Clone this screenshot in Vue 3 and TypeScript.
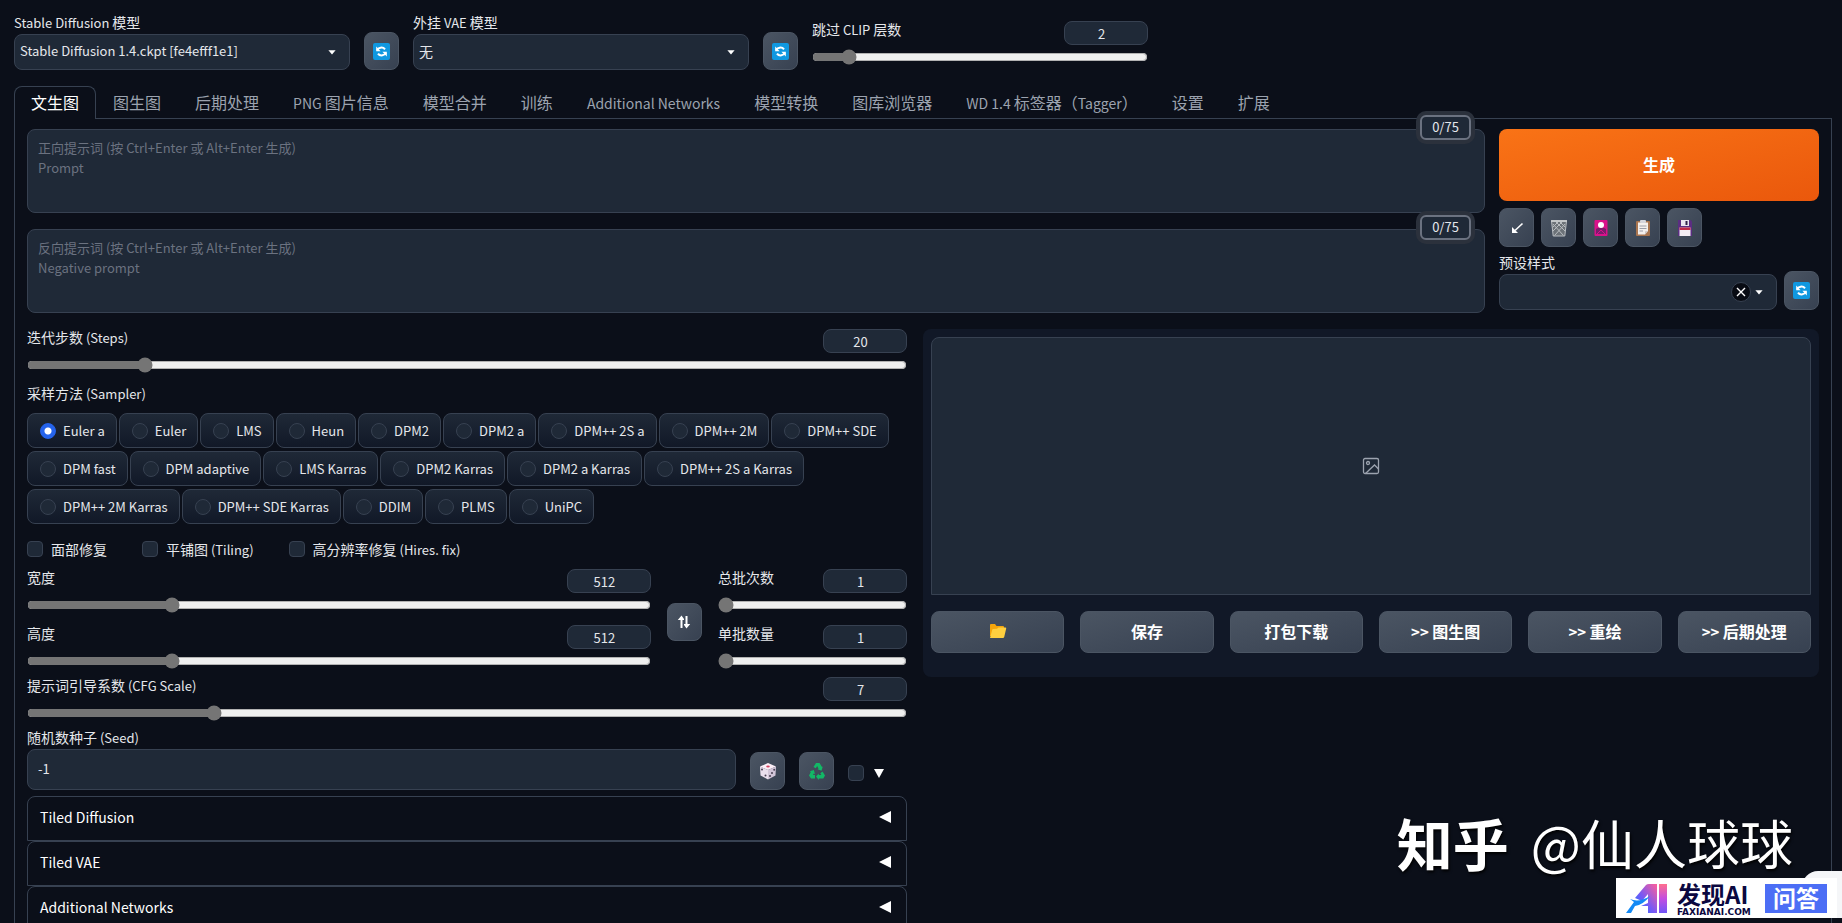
<script setup lang="ts">
import { ref, h, type FunctionalComponent } from 'vue'

interface Range {
  id: string
  label: string
  min: number
  max: number
  step: number
  value: number
}

/* Latin runs are set slightly smaller than the Chinese text around them. */
const Mixed: FunctionalComponent<{ text: string }> = (props) =>
  h(
    'span',
    props.text
      .split(/([\x20-\x7e]+)/)
      .filter((part) => part.length > 0)
      .map((part) => (/^[\x20-\x7e]+$/.test(part) ? h('span', { class: 'latin' }, part) : part)),
  )
Mixed.props = ['text']

const clip = ref<Range>({ id: 'clip', label: '跳过 CLIP 层数', min: 1, max: 12, step: 1, value: 2 })
const steps = ref<Range>({ id: 'steps', label: '迭代步数 (Steps)', min: 1, max: 150, step: 1, value: 20 })
const cfg = ref<Range>({ id: 'cfg', label: '提示词引导系数 (CFG Scale)', min: 1, max: 30, step: 1, value: 7 })
const sizes = ref<Range[]>([
  { id: 'width', label: '宽度', min: 64, max: 2048, step: 8, value: 512 },
  { id: 'height', label: '高度', min: 64, max: 2048, step: 8, value: 512 },
])
const batches = ref<Range[]>([
  { id: 'batch-count', label: '总批次数', min: 1, max: 100, step: 1, value: 1 },
  { id: 'batch-size', label: '单批数量', min: 1, max: 8, step: 1, value: 1 },
])

const tabs = [
  '文生图', '图生图', '后期处理', 'PNG 图片信息', '模型合并', '训练', 'Additional Networks',
  '模型转换', '图库浏览器', 'WD 1.4 标签器（Tagger）', '设置', '扩展',
]
const activeTab = ref('文生图')

const prompts = ref([
  { id: 'prompt', name: '正向提示词', hint: '正向提示词 (按 Ctrl+Enter 或 Alt+Enter 生成)\nPrompt', text: '' },
  { id: 'negative', name: '反向提示词', hint: '反向提示词 (按 Ctrl+Enter 或 Alt+Enter 生成)\nNegative prompt', text: '' },
])

const samplers = [
  'Euler a', 'Euler', 'LMS', 'Heun', 'DPM2', 'DPM2 a', 'DPM++ 2S a', 'DPM++ 2M', 'DPM++ SDE',
  'DPM fast', 'DPM adaptive', 'LMS Karras', 'DPM2 Karras', 'DPM2 a Karras', 'DPM++ 2S a Karras',
  'DPM++ 2M Karras', 'DPM++ SDE Karras', 'DDIM', 'PLMS', 'UniPC',
]
const sampler = ref('Euler a')
const checks = ['面部修复', '平铺图 (Tiling)', '高分辨率修复 (Hires. fix)']
const outputs = ['保存', '打包下载', '>> 图生图', '>> 重绘', '>> 后期处理']
const panels = ['Tiled Diffusion', 'Tiled VAE', 'Additional Networks']
const seed = ref('-1')

function swapSizes(): void {
  const [a, b] = sizes.value
  const held = a.value
  a.value = b.value
  b.value = held
}
</script>

<template>
  <main class="page">
    <svg class="defs" aria-hidden="true">
      <symbol id="refresh" viewBox="0 0 17 17">
        <rect width="17" height="17" rx="2" fill="#1098e0" />
        <path d="M4.2 7.2C5 4.6 9.8 3.4 12 6.4" fill="none" stroke="#fff" stroke-width="2" />
        <path d="M3.2 3.6v4.6h4.4z" fill="#fff" />
        <path d="M12.8 9.8c-.8 2.6-5.6 3.8-7.8.8" fill="none" stroke="#fff" stroke-width="2" />
        <path d="M13.8 13.4V8.8H9.4z" fill="#fff" />
      </symbol>
      <symbol id="caret" viewBox="0 0 8 5"><path d="M.4.2h7.2L4 4.6z" fill="#fff" /></symbol>
    </svg>

    <header class="top">
      <div class="field model">
        <label for="model"><Mixed text="Stable Diffusion 模型" /></label>
        <div class="pick">
          <select id="model" class="small"><option>Stable Diffusion 1.4.ckpt [fe4efff1e1]</option></select>
          <svg class="caret"><use href="#caret" /></svg>
        </div>
      </div>
      <button class="tool" aria-label="刷新模型"><svg width="17" height="17"><use href="#refresh" /></svg></button>
      <div class="field model">
        <label for="vae"><Mixed text="外挂 VAE 模型" /></label>
        <div class="pick">
          <select id="vae"><option>无</option></select>
          <svg class="caret"><use href="#caret" /></svg>
        </div>
      </div>
      <button class="tool" aria-label="刷新 VAE"><svg width="17" height="17"><use href="#refresh" /></svg></button>
      <div class="slider model clip">
        <div class="slider-head">
          <label :for="clip.id"><Mixed :text="clip.label" /></label>
          <input v-model.number="clip.value" type="number" :aria-label="clip.label" />
        </div>
        <input :id="clip.id" v-model.number="clip.value" type="range" :min="clip.min" :max="clip.max" />
      </div>
    </header>

    <nav class="tabs" role="tablist">
      <button
        v-for="tab in tabs" :key="tab" role="tab" class="tab"
        :class="{ active: tab === activeTab }" :aria-selected="tab === activeTab" @click="activeTab = tab"
      ><Mixed :text="tab" /></button>
    </nav>

    <section class="panel">
      <div class="prompt-row">
        <div class="prompts">
          <div v-for="p in prompts" :key="p.id" class="prompt">
            <textarea :id="p.id" v-model="p.text" :placeholder="p.hint" :aria-label="p.name"></textarea>
            <span class="counter">0/75</span>
          </div>
        </div>
        <div class="actions">
          <button class="generate">生成</button>
          <div class="tools">
            <button class="tool" aria-label="读取参数">
              <svg width="16" height="16" viewBox="0 0 16 16">
                <path d="M13.500 3.500 6 10.500" stroke="#fff" stroke-width="1.600" />
                <path d="M3 7v6h6z" fill="#fff" />
              </svg>
            </button>
            <button class="tool" aria-label="清空提示词">
              <svg width="18" height="18" viewBox="0 0 18 18">
                <path d="M1.500 2h15l-1.700 15H3.200z" fill="#6c7278" />
                <path d="M1.500 2h15l-1.700 15H3.200zM3 5l10.500 11.500M6 3l9 9M10 3l5.500 5.500M15 5 4.500 16.500M12 3l-9 9M8 3 2.500 8.500" fill="none" stroke="#b9bdc1" />
                <path d="M1 2h16" stroke="#c9cccf" stroke-width="1.800" />
              </svg>
            </button>
            <button class="tool" aria-label="附加网络">
              <svg width="16" height="18" viewBox="0 0 16 18">
                <rect x="1.500" y="1" width="13" height="16" rx="1" fill="#d9128a" />
                <path d="M3 10c3-2 7-2 10 0v5H3z" fill="#7c1b6d" />
                <circle cx="8" cy="6" r="3" fill="#fff" />
                <path d="M3.500 15.500 8 11l4.500 4.500" fill="none" stroke="#d9128a" />
              </svg>
            </button>
            <button class="tool" aria-label="粘贴样式">
              <svg width="16" height="18" viewBox="0 0 16 18">
                <rect x="1" y="2" width="14" height="15" rx="1" fill="#a8744f" />
                <path d="M3 3.500h10V12l-3 3.500H3z" fill="#f4efed" />
                <rect x="5" y="1" width="6" height="3" rx="1" fill="#d5d5dc" />
                <path d="M4.500 7h7M4.500 9.500h7M4.500 12H8" stroke="#9b9da8" />
                <path d="m10 15.500.2-3.300H13z" fill="#c9c2c0" />
              </svg>
            </button>
            <button class="tool" aria-label="保存样式">
              <svg width="16" height="18" viewBox="0 0 16 18">
                <path d="M1 1h12.500L15 2.500V17H1z" fill="#5b2d82" />
                <rect x="4" y="1" width="8" height="6" fill="#e9e4f0" />
                <rect x="8.500" y="2" width="2" height="4" fill="#30204a" />
                <rect x="2.500" y="8.500" width="11" height="8.500" fill="#f3edf3" />
                <rect x="2.500" y="8.500" width="11" height="2.500" fill="#c12a4a" />
              </svg>
            </button>
          </div>
          <div class="preset-row">
            <div class="field">
              <label for="preset">预设样式</label>
              <div class="pick preset">
                <select id="preset"><option></option></select>
                <button class="clear" aria-label="清除">
                  <svg width="10" height="10" viewBox="0 0 10 10"><path d="m1 1 8 8M9 1 1 9" stroke="#fff" stroke-width="1.400" /></svg>
                </button>
                <svg class="caret"><use href="#caret" /></svg>
              </div>
            </div>
            <button class="tool" aria-label="刷新样式"><svg width="17" height="17"><use href="#refresh" /></svg></button>
          </div>
        </div>
      </div>

      <div class="work">
        <div class="settings">
          <div class="slider">
            <div class="slider-head">
              <label :for="steps.id"><Mixed :text="steps.label" /></label>
              <input v-model.number="steps.value" type="number" :aria-label="steps.label" />
            </div>
            <input :id="steps.id" v-model.number="steps.value" type="range" :min="steps.min" :max="steps.max" />
          </div>

          <fieldset class="samplers">
            <legend><Mixed text="采样方法 (Sampler)" /></legend>
            <div class="choices">
              <label v-for="s in samplers" :key="s" class="choice">
                <input v-model="sampler" type="radio" name="sampler" :value="s" />{{ s }}
              </label>
            </div>
          </fieldset>

          <div class="checks">
            <label v-for="c in checks" :key="c" class="check"><input type="checkbox" /><Mixed :text="c" /></label>
          </div>

          <div class="dimensions">
            <div class="stack">
              <div v-for="r in sizes" :key="r.id" class="slider">
                <div class="slider-head">
                  <label :for="r.id">{{ r.label }}</label>
                  <input v-model.number="r.value" type="number" :aria-label="r.label" />
                </div>
                <input :id="r.id" v-model.number="r.value" type="range" :min="r.min" :max="r.max" :step="r.step" />
              </div>
            </div>
            <button class="tool swap" aria-label="交换宽高" @click="swapSizes">
              <svg width="14" height="14" viewBox="0 0 14 14">
                <path d="M4.500 13V3M9.500 1v10" stroke="#fff" stroke-width="2" />
                <path d="M.8 5 4.500.5 7 4v1zM13.200 9 9.500 13.500 7 10V9z" fill="#fff" />
              </svg>
            </button>
            <div class="stack">
              <div v-for="r in batches" :key="r.id" class="slider">
                <div class="slider-head">
                  <label :for="r.id">{{ r.label }}</label>
                  <input v-model.number="r.value" type="number" :aria-label="r.label" />
                </div>
                <input :id="r.id" v-model.number="r.value" type="range" :min="r.min" :max="r.max" />
              </div>
            </div>
          </div>

          <div class="slider cfg">
            <div class="slider-head">
              <label :for="cfg.id"><Mixed :text="cfg.label" /></label>
              <input v-model.number="cfg.value" type="number" :aria-label="cfg.label" />
            </div>
            <input :id="cfg.id" v-model.number="cfg.value" type="range" :min="cfg.min" :max="cfg.max" />
          </div>

          <div class="seed-row">
            <div class="field">
              <label for="seed"><Mixed text="随机数种子 (Seed)" /></label>
              <input id="seed" v-model="seed" type="text" class="seed" />
            </div>
            <button class="tool" aria-label="随机种子">
              <svg width="18" height="18" viewBox="0 0 18 18">
                <path d="M9 1 17 4.500 9 8 1 4.500z" fill="#fbeef6" />
                <path d="M1 4.500 9 8v9.500L1.500 13.500z" fill="#eadfed" />
                <path d="M17 4.500 9 8v9.500l7.500-4z" fill="#d2c5d8" />
                <ellipse cx="9" cy="4.500" rx="1.800" ry="1" fill="#d0415f" />
                <g fill="#4a4053">
                  <circle cx="3" cy="7.500" r="1" /><circle cx="6.500" cy="13.500" r="1" />
                  <circle cx="11" cy="14" r="1" /><circle cx="13" cy="11" r="1" /><circle cx="15.200" cy="7.700" r="1" />
                </g>
              </svg>
            </button>
            <button class="tool" aria-label="复用种子">
              <svg width="18" height="18" viewBox="0 0 18 18" fill="#12b866">
                <path d="M5.500 5 8 1h3.500l2.500 4 .8-.4-1.300 4.200-4-1.600 1-.5L9.200 4 7.800 6.200z" />
                <path d="m14.500 9.500 2.500 4-1.700 3h-4.500v1.400L8 14.600l2.800-3.200V13h2.500l-1-1.800z" />
                <path d="M7 16.500H3l-2-3 1.800-3.600-1-.6 4-1.300L7 12l-1.200-.6-.8 1.600h2z" />
              </svg>
            </button>
            <label class="extra"><input type="checkbox" aria-label="更多种子选项" /><svg width="10" height="9" viewBox="0 0 10 9"><path d="M0 0h10L5 9z" fill="#fff" /></svg></label>
          </div>

          <div class="accordions">
            <button v-for="p in panels" :key="p" class="accordion">
              <span>{{ p }}</span>
              <svg width="12" height="12" viewBox="0 0 12 12"><path d="M12 0v12L0 6z" fill="#fff" /></svg>
            </button>
          </div>
        </div>

        <section class="output">
          <div class="gallery">
            <svg width="18" height="18" viewBox="0 0 18 18" fill="none" stroke="#9ca3af" stroke-width="1.300">
              <rect x="1.500" y="1.500" width="15" height="15" rx="1.500" />
              <circle cx="6" cy="6" r="1.500" />
              <path d="m3.500 16.500 9-8.500 4 4" />
            </svg>
          </div>
          <div class="output-actions">
            <button aria-label="打开输出目录">
              <svg width="18" height="16" viewBox="0 0 18 16">
                <path d="M1 13V2q0-1 1-1h4l1.500 2H14q1 0 1 1v9z" fill="#f5a50c" />
                <path d="m1 15 2.300-8.500Q3.600 6 4 6l4-.2L9.500 4.500h7q.9 0 .7.9L15.200 14q-.3 1-1.200 1z" fill="#ffcf3f" />
              </svg>
            </button>
            <button v-for="o in outputs" :key="o"><Mixed :text="o" /></button>
          </div>
        </section>
      </div>
    </section>

    <aside class="marks">
      <p class="author"><strong>知乎</strong><span>@仙人球球</span></p>
      <div class="brand-wrap">
        <span class="bubble"></span>
        <div class="brand">
          <svg width="41" height="31" viewBox="0 0 41 31" aria-hidden="true">
            <defs>
              <linearGradient id="ai" x1="0" y1="1" x2="1" y2="0">
                <stop offset="0" stop-color="#1478ff" /><stop offset=".45" stop-color="#7659f5" /><stop offset="1" stop-color="#ff5f9a" />
              </linearGradient>
              <linearGradient id="bar" x1="0" y1="0" x2="0" y2="1">
                <stop offset="0" stop-color="#ff6f8e" /><stop offset=".5" stop-color="#c34de0" /><stop offset="1" stop-color="#6f55f8" />
              </linearGradient>
            </defs>
            <path d="M9 15 20 2q1-1 3-1h8v29h-9v-7h-7l7-3v-9l-6 7z" fill="url(#ai)" />
            <path d="M4 16q9 4 20-3-7 9-15 10l-4 7H0l8-11z" fill="#1389f5" />
            <path d="M33 1h8v29h-8z" fill="url(#bar)" />
          </svg>
          <div class="brand-name"><b>发现AI</b><small>FAXIANAI.COM</small></div>
          <span class="qa">问答</span>
        </div>
      </div>
    </aside>
  </main>
</template>

<style>
html,
body {
  background: #0b0f19;
}
.latin {
  font-size: 13px;
  line-height: 1;
  white-space: pre;
}
.tab .latin {
  font-size: 14px;
}
.output-actions .latin {
  font-size: 15px;
}
</style>

<style scoped>
* {
  box-sizing: border-box;
}
.page {
  position: relative;
  height: 100vh;
  overflow: hidden;
  padding: 14px 10px 0 14px;
  display: flex;
  flex-direction: column;
  background: #0b0f19;
  color: #e5e7eb;
  font-family: 'Noto Sans CJK SC', sans-serif;
  font-size: 14px;
  line-height: 18px;
}
.defs {
  position: absolute;
  width: 0;
  height: 0;
}
button,
input,
select,
textarea {
  margin: 0;
  font: inherit;
  color: inherit;
}
button {
  cursor: pointer;
}
label,
legend {
  display: block;
  height: 18px;
  padding: 0;
  line-height: 16px;
  white-space: nowrap;
}
.top {
  display: flex;
  align-items: flex-end;
  gap: 14px;
}
.model {
  flex: 0 1 336px;
  min-width: 0;
}
.clip {
  align-self: flex-start;
  margin-top: 7px;
}
.field {
  display: flex;
  flex-direction: column;
  gap: 2px;
}
.pick {
  position: relative;
}
.pick select {
  display: block;
  width: 100%;
  height: 36px;
  padding: 0 30px 2px 5px;
  appearance: none;
  background: #1f2937;
  border: 1px solid #374151;
  border-radius: 8px;
}
.pick select.small {
  font-size: 13px;
}
.caret {
  position: absolute;
  right: 14px;
  top: 16px;
  width: 8px;
  height: 5px;
  pointer-events: none;
}
.tool {
  flex: none;
  display: flex;
  align-items: center;
  justify-content: center;
  width: 35px;
  height: 38px;
  padding: 0;
  background: linear-gradient(to bottom right, #4b5563, #374151);
  border: 1px solid #4b5563;
  border-radius: 8px;
}
.actions .tool {
  height: 39px;
}
.slider-head {
  display: flex;
  justify-content: space-between;
  align-items: flex-start;
}
.slider-head input {
  width: 84px;
  height: 24px;
  padding: 0 2px 0 8px;
  font-size: 13px;
  text-align: center;
  background: #1f2937;
  border: 1px solid #374151;
  border-radius: 8px;
}
.slider input[type='range'] {
  display: block;
  width: 100%;
  height: 16px;
  margin-top: 4px;
  accent-color: #757575;
}
.tabs {
  display: flex;
  margin-top: 16px;
  height: 33px;
  border-bottom: 1px solid #374151;
}
.tab {
  height: 33px;
  padding: 0 16px 2px;
  font-size: 16px;
  white-space: nowrap;
  color: #9ca3af;
  background: none;
  border: 1px solid transparent;
  border-bottom: 0;
  border-radius: 8px 8px 0 0;
}
.tab.active {
  color: #fff;
  background: #0b0f19;
  border-color: #374151;
}
.panel {
  flex: 1;
  padding: 10px 12px 0;
  border: 1px solid #374151;
  border-width: 0 1px;
}
.prompt-row {
  display: grid;
  grid-template-columns: 1fr 320px;
  gap: 14px;
}
.prompts {
  display: flex;
  flex-direction: column;
  gap: 16px;
}
.prompt {
  position: relative;
  height: 84px;
}
.prompt textarea {
  display: block;
  width: 100%;
  height: 100%;
  padding: 8px 10px;
  font-size: 13px;
  line-height: 20px;
  resize: none;
  background: #1f2937;
  border: 1px solid #374151;
  border-radius: 8px;
}
.prompt textarea::placeholder {
  color: #6b7280;
}
.counter {
  position: absolute;
  top: -14px;
  right: 14px;
  width: 51px;
  height: 25px;
  line-height: 20px;
  font-size: 13px;
  text-align: center;
  background: #1f2937;
  border: 2px solid #6b7280;
  border-radius: 6px;
  box-shadow: 0 0 0 4px #2b313c;
}
.generate {
  display: block;
  width: 100%;
  height: 72px;
  padding: 0 0 2px;
  font-size: 16px;
  font-weight: 700;
  color: #fff;
  background: linear-gradient(to bottom right, #f97316, #ea580c);
  border: 0;
  border-radius: 8px;
}
.tools {
  display: flex;
  gap: 7px;
  margin-top: 7px;
}
.preset-row {
  display: flex;
  align-items: flex-end;
  gap: 7px;
  margin-top: 7px;
}
.preset-row .field {
  flex: 1;
}
.clear {
  position: absolute;
  right: 26px;
  top: 8px;
  display: flex;
  align-items: center;
  justify-content: center;
  width: 20px;
  height: 20px;
  padding: 0;
  background: #080b13;
  border: 1px solid #374151;
  border-radius: 50%;
}
.work {
  display: grid;
  grid-template-columns: 55fr 56fr;
  align-items: start;
  gap: 16px;
  margin-top: 16px;
}
.samplers {
  margin: 12px 0 0;
  padding: 0;
  border: 0;
}
.choices {
  display: flex;
  flex-wrap: wrap;
  gap: 3px 2px;
  margin-top: 10px;
}
.choice {
  display: flex;
  align-items: center;
  gap: 7px;
  height: 35px;
  padding: 0 11px 0 12px;
  font-size: 13px;
  background: linear-gradient(to top, #111827, #1f2937);
  border: 1px solid #374151;
  border-radius: 8px;
}
input[type='radio'],
input[type='checkbox'] {
  flex: none;
  appearance: none;
  width: 16px;
  height: 16px;
  background: #1f2937;
  border: 1px solid #374151;
  border-radius: 4px;
}
input[type='radio'] {
  border-radius: 50%;
}
input[type='radio']:checked {
  background: radial-gradient(circle, #fff 3px, #2563eb 4px);
  border-color: #2563eb;
}
.checks {
  display: flex;
  gap: 35px;
  margin-top: 16px;
}
.check {
  display: flex;
  align-items: center;
  gap: 8px;
}
.dimensions {
  display: grid;
  grid-template-columns: 33fr 35px 10fr;
  align-items: center;
  gap: 16px;
  margin-top: 11px;
}
.swap {
  margin-top: 6px;
}
.stack {
  display: flex;
  flex-direction: column;
  gap: 12px;
}
.cfg {
  margin-top: 8px;
}
.seed-row {
  display: flex;
  align-items: flex-end;
  gap: 14px;
  margin-top: 8px;
}
.seed-row .field {
  flex: 1;
}
.seed {
  width: 100%;
  height: 41px;
  padding: 0 10px 2px;
  font-size: 13px;
  background: #1f2937;
  border: 1px solid #374151;
  border-radius: 8px;
}
.extra {
  display: flex;
  align-items: center;
  gap: 10px;
  height: 16px;
  margin: 0 23px 9px 0;
}
.accordions {
  margin-top: 6px;
}
.accordion {
  display: flex;
  align-items: center;
  justify-content: space-between;
  width: 100%;
  height: 45px;
  padding: 0 15px 3px 12px;
  font-size: 14px;
  color: #fff;
  background: none;
  border: 1px solid #374151;
  border-radius: 8px 8px 0 0;
}
.output {
  padding: 8px 8px 24px;
  background: #111827;
  border-radius: 8px;
}
.gallery {
  display: flex;
  align-items: center;
  justify-content: center;
  height: 258px;
  background: #1f2937;
  border: 1px solid #374151;
  border-radius: 8px 8px 0 0;
}
.output-actions {
  display: grid;
  grid-template-columns: repeat(6, 1fr);
  gap: 16px;
  margin-top: 16px;
}
.output-actions button {
  display: flex;
  align-items: center;
  justify-content: center;
  height: 42px;
  padding: 0 0 2px;
  font-size: 16px;
  font-weight: 700;
  white-space: nowrap;
  color: #fff;
  background: linear-gradient(to bottom right, #4b5563, #374151);
  border: 1px solid #4b5563;
  border-radius: 8px;
}
.marks {
  position: absolute;
  right: 0;
  bottom: 5px;
  display: flex;
  flex-direction: column;
  align-items: flex-end;
}
.author {
  display: flex;
  gap: 22px;
  margin: 0 49px 4px 0;
  font-size: 53px;
  line-height: 64px;
  color: #fff;
  text-shadow: 1px 2px 3px #000;
}
.author strong {
  font-size: 56px;
}
.author span {
  font-weight: 400;
}
.brand-wrap {
  position: relative;
  padding-right: 5px;
}
.bubble {
  position: absolute;
  right: 0;
  bottom: 0;
  width: 40px;
  height: 47px;
  background: #f5f6f8;
  border-radius: 16px 0 0 0;
}
.brand {
  position: relative;
  display: flex;
  align-items: center;
  gap: 10px;
  height: 40px;
  padding: 0 10px;
  background: #fff;
}
.brand-name {
  display: flex;
  flex-direction: column;
  width: 78px;
  color: #0b0840;
}
.brand-name b {
  font-size: 24px;
  line-height: 28px;
}
.brand-name small {
  font-family: 'DejaVu Sans', sans-serif;
  font-size: 9px;
  font-weight: 700;
  line-height: 9px;
}
.qa {
  width: 62px;
  height: 29px;
  font-size: 23px;
  font-weight: 700;
  line-height: 27px;
  text-align: center;
  color: #fff;
  background: #4c6ef5;
}
</style>
